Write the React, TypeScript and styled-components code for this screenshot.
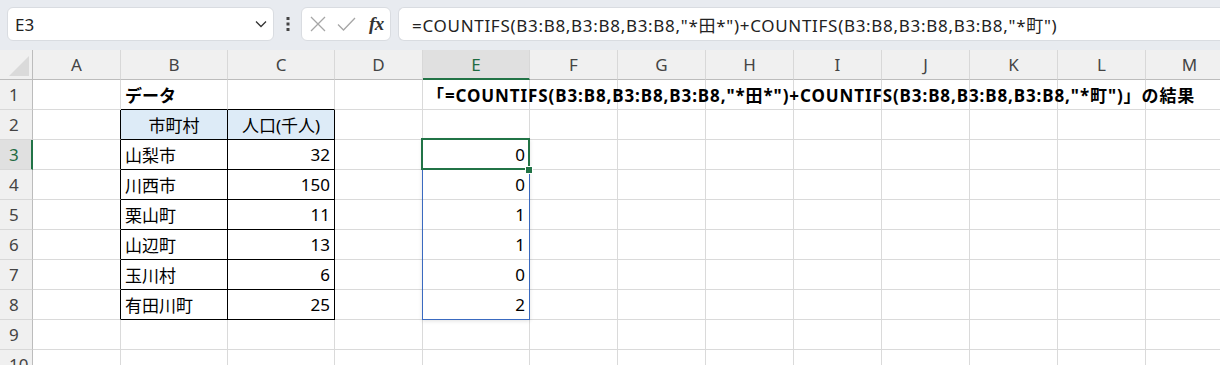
import styled, { createGlobalStyle } from 'styled-components'

const GlobalStyle = createGlobalStyle`
  html, body {
    margin: 0;
    padding: 0;
    overflow: hidden;
    background: #ffffff;
    font-family: 'Noto Sans', 'Noto Sans CJK JP', sans-serif;
  }
`

const COLS = ['A', 'B', 'C', 'D', 'E', 'F', 'G', 'H', 'I', 'J', 'K', 'L', 'M']
const WIDTHS = [88, 107, 107, 88, 107, 88, 88, 88, 88, 88, 88, 88, 88]
const ROW_H = 30
const HEAD_W = 33

type CellData = { text: string; align?: 'left' | 'right' | 'center'; bold?: boolean; fill?: boolean; overflow?: boolean }

const data: Record<string, CellData> = {
  B1: { text: 'データ', bold: true },
  E1: {
    text: '「=COUNTIFS(B3:B8,B3:B8,B3:B8,"*田*")+COUNTIFS(B3:B8,B3:B8,B3:B8,"*町")」の結果',
    bold: true,
    overflow: true,
  },
  B2: { text: '市町村', align: 'center', fill: true },
  C2: { text: '人口(千人)', align: 'center', fill: true },
}

const towns = [
  ['山梨市', '32', '0'],
  ['川西市', '150', '0'],
  ['栗山町', '11', '1'],
  ['山辺町', '13', '1'],
  ['玉川村', '6', '0'],
  ['有田川町', '25', '2'],
]
towns.forEach(([name, pop, res], i) => {
  const r = i + 3
  data[`B${r}`] = { text: name }
  data[`C${r}`] = { text: pop, align: 'right' }
  data[`E${r}`] = { text: res, align: 'right' }
})

const inTable = (col: string, row: number) => (col === 'B' || col === 'C') && row >= 2 && row <= 8

const App = () => {
  const rows = Array.from({ length: 10 }, (_, i) => i + 1)
  const left = (idx: number) => HEAD_W - 1 + WIDTHS.slice(0, idx).reduce((a, b) => a + b, 0)

  return (
    <>
      <GlobalStyle />
      <Toolbar>
        <NameBox>
          <span>E3</span>
          <svg width='12' height='8' viewBox='0 0 12 8'>
            <path d='M1 1.5 L6 6.5 L11 1.5' fill='none' stroke='#333' strokeWidth='1.3' />
          </svg>
        </NameBox>
        <Kebab>
          <svg width='4' height='14' viewBox='0 0 4 14'>
            <rect x='0.5' y='0' width='3' height='3' fill='#444' />
            <rect x='0.5' y='5.5' width='3' height='3' fill='#444' />
            <rect x='0.5' y='11' width='3' height='3' fill='#444' />
          </svg>
        </Kebab>
        <FuncBox>
          <svg width='16' height='16' viewBox='0 0 16 16'>
            <path d='M1 1 L15 15 M15 1 L1 15' stroke='#a6a6a6' strokeWidth='1.3' fill='none' />
          </svg>
          <svg width='19' height='14' viewBox='0 0 19 14'>
            <path d='M1 7.5 L6.5 13 L18 1' stroke='#a6a6a6' strokeWidth='1.3' fill='none' />
          </svg>
          <Fx>fx</Fx>
        </FuncBox>
        <FormulaInput>=COUNTIFS(B3:B8,B3:B8,B3:B8,"*田*")+COUNTIFS(B3:B8,B3:B8,B3:B8,"*町")</FormulaInput>
      </Toolbar>

      <Sheet>
        <Grid>
          <Corner>
            <svg width='20' height='20' viewBox='0 0 20 20'>
              <path d='M20 0 L20 20 L0 20 Z' fill='#dadada' />
            </svg>
          </Corner>
          {COLS.map(c => (
            <ColHeader key={c} $active={c === 'E'}>
              {c}
            </ColHeader>
          ))}
          {rows.map(r => (
            <Row key={r}>
              <RowHeader $active={r === 3}>{r}</RowHeader>
              {COLS.map((c, ci) => {
                const d = data[`${c}${r}`]
                const boxed = inTable(c, r)
                const nextBoxed = ci + 1 < COLS.length && inTable(COLS[ci + 1], r)
                const belowBoxed = inTable(c, r + 1)
                return (
                  <Cell
                    key={c}
                    $align={d?.align ?? 'left'}
                    $bold={!!d?.bold}
                    $fill={!!d?.fill}
                    $rDark={boxed || nextBoxed}
                    $bDark={boxed || belowBoxed}
                    $overflow={!!d?.overflow}
                  >
                    {d?.text}
                  </Cell>
                )
              })}
            </Row>
          ))}
        </Grid>
        <Range style={{ left: left(4), width: WIDTHS[4] + 1, top: ROW_H * 3 - 1, height: ROW_H * 6 + 1 }} />
        <Active style={{ left: left(4) - 1, width: WIDTHS[4] + 2, top: ROW_H * 3 - 2, height: ROW_H + 2 }} />
        <Handle style={{ left: left(5) - 3, top: ROW_H * 4 - 3 }} />
      </Sheet>
    </>
  )
}

export default App

const Toolbar = styled.div`
  height: 50px;
  box-sizing: border-box;
  background: #e8ebf0;
  display: flex;
  align-items: flex-start;
  padding: 7px 0 0 7px;
`

const NameBox = styled.div`
  width: 267px;
  height: 34px;
  box-sizing: border-box;
  background: #fff;
  border: 1px solid #d9dce1;
  border-radius: 6px;
  display: flex;
  align-items: center;
  justify-content: space-between;
  padding: 0 6px 0 7px;
  font-size: 17px;
  color: #222;
`

const Kebab = styled.div`
  width: 27px;
  height: 34px;
  display: flex;
  align-items: center;
  justify-content: center;
`

const FuncBox = styled.div`
  width: 90px;
  height: 34px;
  box-sizing: border-box;
  background: #fff;
  border: 1px solid #d9dce1;
  border-radius: 6px;
  display: flex;
  align-items: center;
  padding: 0 6px 0 8px;
  gap: 11px;
`

const Fx = styled.span`
  font-family: 'Liberation Serif', 'DejaVu Serif', serif;
  font-style: italic;
  font-weight: 700;
  font-size: 19px;
  color: #333;
  margin-left: 2px;
  letter-spacing: -0.5px;
`

const FormulaInput = styled.div`
  flex: 1;
  margin-left: 7px;
  height: 34px;
  box-sizing: border-box;
  background: #fff;
  border: 1px solid #d9dce1;
  border-right: none;
  border-radius: 6px 0 0 6px;
  display: flex;
  align-items: center;
  padding-left: 13px;
  font-size: 17px;
  letter-spacing: 0.7px;
  color: #222;
  white-space: nowrap;
  overflow: hidden;
`

const Sheet = styled.div`
  position: relative;
`

const Grid = styled.div`
  display: grid;
  grid-template-columns: ${HEAD_W}px ${WIDTHS.map(w => `${w}px`).join(' ')};
  grid-auto-rows: ${ROW_H}px;
  width: max-content;
`

const Row = styled.div`
  display: contents;
`

const Corner = styled.div`
  background: #f0f0f0;
  border-right: 1px solid #bcbcbc;
  border-bottom: 1px solid #bcbcbc;
  box-sizing: border-box;
  display: flex;
  align-items: flex-end;
  justify-content: flex-end;
  padding: 0 3px 3px 0;
`

const ColHeader = styled.div<{ $active: boolean }>`
  box-sizing: border-box;
  background: ${p => (p.$active ? '#e0e0e0' : '#f0f0f0')};
  border-right: 1px solid #d8d8d8;
  border-bottom: ${p => (p.$active ? '2px solid #217346' : '1px solid #bcbcbc')};
  display: flex;
  align-items: center;
  justify-content: center;
  font-size: 17px;
  color: ${p => (p.$active ? '#1e6b41' : '#444')};
`

const RowHeader = styled.div<{ $active: boolean }>`
  box-sizing: border-box;
  background: ${p => (p.$active ? '#e0e0e0' : '#f0f0f0')};
  border-right: ${p => (p.$active ? '2px solid #217346' : '1px solid #bcbcbc')};
  border-bottom: 1px solid #d8d8d8;
  display: flex;
  align-items: center;
  padding-left: 9px;
  font-size: 17px;
  color: ${p => (p.$active ? '#1e6b41' : '#444')};
`

const Cell = styled.div<{
  $align: 'left' | 'right' | 'center'
  $bold: boolean
  $fill: boolean
  $rDark: boolean
  $bDark: boolean
  $overflow: boolean
}>`
  box-sizing: border-box;
  position: relative;
  background: ${p => (p.$fill ? '#ddebf7' : '#fff')};
  border-right: 1px solid ${p => (p.$rDark ? '#000' : '#dadada')};
  border-bottom: 1px solid ${p => (p.$bDark ? '#000' : '#dadada')};
  display: flex;
  align-items: center;
  justify-content: ${p => (p.$align === 'right' ? 'flex-end' : p.$align === 'center' ? 'center' : 'flex-start')};
  padding: 0 4px;
  font-size: 17px;
  font-weight: ${p => (p.$bold ? 700 : 400)};
  letter-spacing: ${p => (p.$overflow ? '0.9px' : '0')};
  color: #000;
  white-space: nowrap;
  overflow: ${p => (p.$overflow ? 'visible' : 'hidden')};
  z-index: ${p => (p.$overflow ? 1 : 0)};
`

const Range = styled.div`
  position: absolute;
  box-sizing: border-box;
  border: 1px solid #3a6ac0;
  box-shadow: 0 1px 4px rgba(0, 0, 0, 0.12);
  pointer-events: none;
`

const Active = styled.div`
  position: absolute;
  box-sizing: border-box;
  border: 2px solid #217346;
  pointer-events: none;
`

const Handle = styled.div`
  position: absolute;
  width: 6px;
  height: 6px;
  background: #217346;
  outline: 1px solid #fff;
`
